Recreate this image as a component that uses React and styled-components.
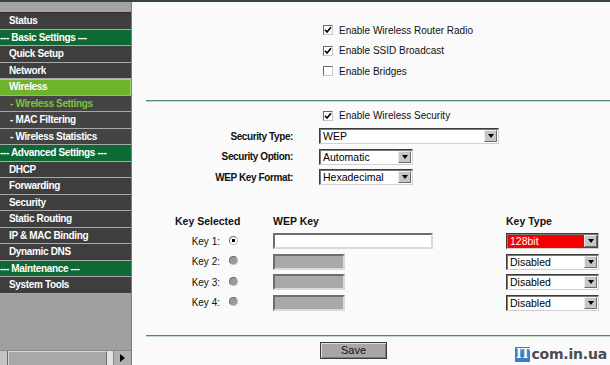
import React from "react";
import styled, { createGlobalStyle } from "styled-components";

const GlobalStyle = createGlobalStyle`
  html, body {
    margin: 0;
    padding: 0;
    background: #fafafa;
  }
  body {
    font-family: "Liberation Sans", Arial, sans-serif;
  }
`;

const Page = styled.div`
  position: relative;
  display: flex;
  width: 610px;
  height: 365px;
  box-sizing: border-box;
  border-top: 2px solid #34463f;
  overflow: hidden;
`;

/* ---------- sidebar ---------- */

const Sidebar = styled.div`
  display: flex;
  flex-direction: column;
  width: 131px;
  flex-shrink: 0;
  background: #a0a0a0;
  border-right: 1px solid #7c7c7c;
`;

const TopStrip = styled.div`
  height: 10px;
  background: #a3a3a3;
  border-bottom: 1px solid #2c2c2c;
`;

const MenuItem = styled.div`
  height: 15.5px;
  line-height: 15.5px;
  border-bottom: 1px solid #a9a9a9;
  font-size: 10px;
  font-weight: bold;
  letter-spacing: -0.35px;
  white-space: nowrap;
  overflow: hidden;
  color: ${(p) => (p.$current ? "#7fc23c" : "#fff")};
  padding-left: ${(p) =>
    p.$kind === "group" ? "0" : p.$kind === "sub" ? "10px" : "9px"};
  background: ${(p) =>
    p.$kind === "group"
      ? "#0d6a34"
      : p.$kind === "active"
      ? "#6db32b"
      : p.$kind === "sub"
      ? "#444"
      : "#3e3e3e"};
  box-shadow: ${(p) =>
    p.$kind === "active" ? "inset 0 1px 0 #a6d56f, inset -1px 0 0 #a6d56f" : "none"};
`;

const Filler = styled.div`
  flex: 1;
  background: #a0a0a0;
`;

const ScrollBar = styled.div`
  display: flex;
  height: 14px;
  background: #b8b8b8;
  border-top: 1px solid #8a8a8a;
`;

const ScrollStub = styled.div`
  width: 7px;
  background: #c4c4c4;
  border-right: 1px solid #6a6a6a;
`;

const ScrollThumb = styled.div`
  flex: 1;
  background: #a8a8a8;
  border-top: 1px solid #d6d6d6;
  border-left: 1px solid #d6d6d6;
  border-right: 1px solid #6a6a6a;
`;

const ScrollGap = styled.div`
  width: 6px;
  background: #e2e2e2;
  border-right: 1px solid #8a8a8a;
`;

const ScrollArrow = styled.div`
  width: 17px;
  display: flex;
  align-items: center;
  justify-content: center;
  background: #b0b0b0;
  &::after {
    content: "";
    border-top: 4px solid transparent;
    border-bottom: 4px solid transparent;
    border-left: 5px solid #000;
  }
`;

/* ---------- main panel ---------- */

const Main = styled.div`
  flex: 1;
  display: flex;
  flex-direction: column;
  padding-left: 14px;
  background: #fafafa;
  color: #111;
  font-size: 10px;
`;

const Section = styled.div`
  display: flex;
  flex-direction: column;
  margin-top: ${(p) => p.$top || 0}px;
`;

const FormRow = styled.div`
  display: grid;
  grid-template-columns: 147px 1fr;
  column-gap: 26px;
  align-items: center;
  height: 20.5px;
`;

const Label = styled.div`
  text-align: right;
  font-weight: bold;
  letter-spacing: -0.4px;
`;

const CheckLine = styled.label`
  display: flex;
  align-items: center;
  grid-column: 2;
  padding-left: 4px;
`;

const CheckBox = styled.span`
  display: inline-flex;
  align-items: center;
  justify-content: center;
  width: 8px;
  height: 8px;
  margin-right: 6px;
  background: #fff;
  border: 1px solid;
  border-color: #6a6a6a #c8c8c8 #c8c8c8 #6a6a6a;
`;

const Divider = styled.div`
  height: 1px;
  background: #4f8a6d;
  border-bottom: 1px solid #c4d8cd;
  margin-top: ${(p) => p.$top}px;
`;

const SelectBox = styled.div`
  display: flex;
  width: ${(p) => p.$w}px;
  height: 16px;
  box-sizing: border-box;
  border: 1px solid;
  border-color: #3c3c3c #d0d0d0 #d0d0d0 #3c3c3c;
  box-shadow: inset 1px 1px 0 #7a7a7a;
  background: ${(p) => (p.$red ? "#f40000" : "#fff")};
  color: ${(p) => (p.$red ? "#fff" : "#000")};
`;

const SelectValue = styled.span`
  flex: 1;
  padding-left: 3px;
  line-height: 14px;
  font-size: 10.5px;
`;

const SelectArrow = styled.span`
  display: flex;
  align-items: center;
  justify-content: center;
  width: 11px;
  margin: 1px 1px 1px 0;
  background: #c6c6c6;
  border: 1px solid;
  border-color: #eee #6c6c6c #6c6c6c #eee;
  &::after {
    content: "";
    border-left: 3px solid transparent;
    border-right: 3px solid transparent;
    border-top: 4px solid #000;
  }
`;

const KeyGrid = styled.div`
  display: grid;
  grid-template-columns: 76px 51px 233px 1fr;
  grid-auto-rows: 20.5px;
  align-items: center;
  margin-top: 23px;
`;

const HeadCell = styled.div`
  font-weight: bold;
  font-size: 10.5px;
  padding-left: ${(p) => p.$pad || 0}px;
  grid-column: ${(p) => p.$span || "auto"};
`;

const KeyLabel = styled.div`
  text-align: right;
  padding-right: 2px;
`;

const Radio = styled.span`
  display: inline-block;
  width: 9px;
  height: 9px;
  margin-left: 7px;
  box-sizing: border-box;
  border-radius: 50%;
  border: 1px solid;
  border-color: #6a6a6a #c0c0c0 #c0c0c0 #6a6a6a;
  background: ${(p) =>
    p.$on ? "radial-gradient(circle, #000 0 1.6px, #fff 2px)" : "#9a9a9a"};
`;

const TextInput = styled.div`
  width: ${(p) => p.$w}px;
  height: 16px;
  box-sizing: border-box;
  border: 2px solid;
  border-color: #6e6e6e #dadada #dadada #6e6e6e;
  background: ${(p) => (p.$disabled ? "#a9a9a9" : "#fff")};
`;

const SaveRow = styled.div`
  display: flex;
  padding-left: 174px;
  margin-top: 5px;
`;

const SaveButton = styled.button`
  width: 67px;
  height: 17px;
  padding: 0;
  background: #a7a7a7;
  border: 1px solid #3c3c3c;
  box-shadow: inset 1px 1px 0 #dcdcdc, inset -1px -1px 0 #7c7c7c;
  font-family: "Liberation Sans", Arial, sans-serif;
  font-size: 11px;
  color: #111;
`;

const Watermark = styled.div`
  position: absolute;
  right: 3px;
  bottom: 3px;
  display: flex;
  align-items: center;
  font-family: "DejaVu Sans", Verdana, sans-serif;
`;

const ItBadge = styled.span`
  display: inline-block;
  height: 15px;
  line-height: 15px;
  padding: 0 1px;
  margin-right: 1px;
  background: #3a7fc8;
  color: #fff;
  font-family: "DejaVu Serif", serif;
  font-size: 12px;
  font-weight: bold;
  letter-spacing: -0.5px;
`;

const SiteName = styled.span`
  color: #4a4d50;
  font-size: 14px;
  font-weight: bold;
  letter-spacing: -0.2px;
`;

/* ---------- data ---------- */

const menu = [
  { label: "Status" },
  { label: "--- Basic Settings ---", kind: "group" },
  { label: "Quick Setup" },
  { label: "Network" },
  { label: "Wireless", kind: "active" },
  { label: "- Wireless Settings", kind: "sub", current: true },
  { label: "- MAC Filtering", kind: "sub" },
  { label: "- Wireless Statistics", kind: "sub" },
  { label: "--- Advanced Settings ---", kind: "group" },
  { label: "DHCP" },
  { label: "Forwarding" },
  { label: "Security" },
  { label: "Static Routing" },
  { label: "IP & MAC Binding" },
  { label: "Dynamic DNS" },
  { label: "--- Maintenance ---", kind: "group" },
  { label: "System Tools" },
];

const keys = [
  { n: 1, on: true, input: 160, type: "128bit", red: true },
  { n: 2, input: 72, type: "Disabled" },
  { n: 3, input: 72, type: "Disabled" },
  { n: 4, input: 72, type: "Disabled" },
];

const Tick = () => (
  <svg width="8" height="8" viewBox="0 0 8 8">
    <path d="M1 3.8 L3 6 L7 1.2" fill="none" stroke="#000" strokeWidth="1.6" />
  </svg>
);

const Check = ({ checked, children }) => (
  <CheckLine>
    <CheckBox>{checked && <Tick />}</CheckBox>
    {children}
  </CheckLine>
);

const Select = ({ width, value, red }) => (
  <SelectBox $w={width} $red={red}>
    <SelectValue>{value}</SelectValue>
    <SelectArrow />
  </SelectBox>
);

const App = () => (
  <>
    <GlobalStyle />
    <Page>
      <Sidebar>
        <TopStrip />
        {menu.map((m) => (
          <MenuItem key={m.label} $kind={m.kind} $current={m.current}>
            {m.label}
          </MenuItem>
        ))}
        <Filler />
        <ScrollBar>
          <ScrollStub />
          <ScrollThumb />
          <ScrollGap />
          <ScrollArrow />
        </ScrollBar>
      </Sidebar>

      <Main>
        <Section $top={18}>
          <FormRow>
            <Check checked>Enable Wireless Router Radio</Check>
          </FormRow>
          <FormRow>
            <Check checked>Enable SSID Broadcast</Check>
          </FormRow>
          <FormRow>
            <Check>Enable Bridges</Check>
          </FormRow>
        </Section>

        <Divider $top={18.5} />

        <Section $top={3.25}>
          <FormRow>
            <Check checked>Enable Wireless Security</Check>
          </FormRow>
          <FormRow>
            <Label>Security Type:</Label>
            <Select width={180} value="WEP" />
          </FormRow>
          <FormRow>
            <Label>Security Option:</Label>
            <Select width={94} value="Automatic" />
          </FormRow>
          <FormRow>
            <Label>WEP Key Format:</Label>
            <Select width={94} value="Hexadecimal" />
          </FormRow>
        </Section>

        <KeyGrid>
          <HeadCell $span="1 / span 2" $pad={29}>
            Key Selected
          </HeadCell>
          <HeadCell>WEP Key</HeadCell>
          <HeadCell>Key Type</HeadCell>
          {keys.map((k) => (
            <React.Fragment key={k.n}>
              <KeyLabel>Key {k.n}:</KeyLabel>
              <div>
                <Radio $on={k.on} />
              </div>
              <TextInput $w={k.input} $disabled={!k.on} />
              <Select width={93} value={k.type} red={k.red} />
            </React.Fragment>
          ))}
        </KeyGrid>

        <Divider $top={21.75} />

        <SaveRow>
          <SaveButton>Save</SaveButton>
        </SaveRow>
      </Main>

      <Watermark>
        <ItBadge>IT</ItBadge>
        <SiteName>com.in.ua</SiteName>
      </Watermark>
    </Page>
  </>
);

export default App;
